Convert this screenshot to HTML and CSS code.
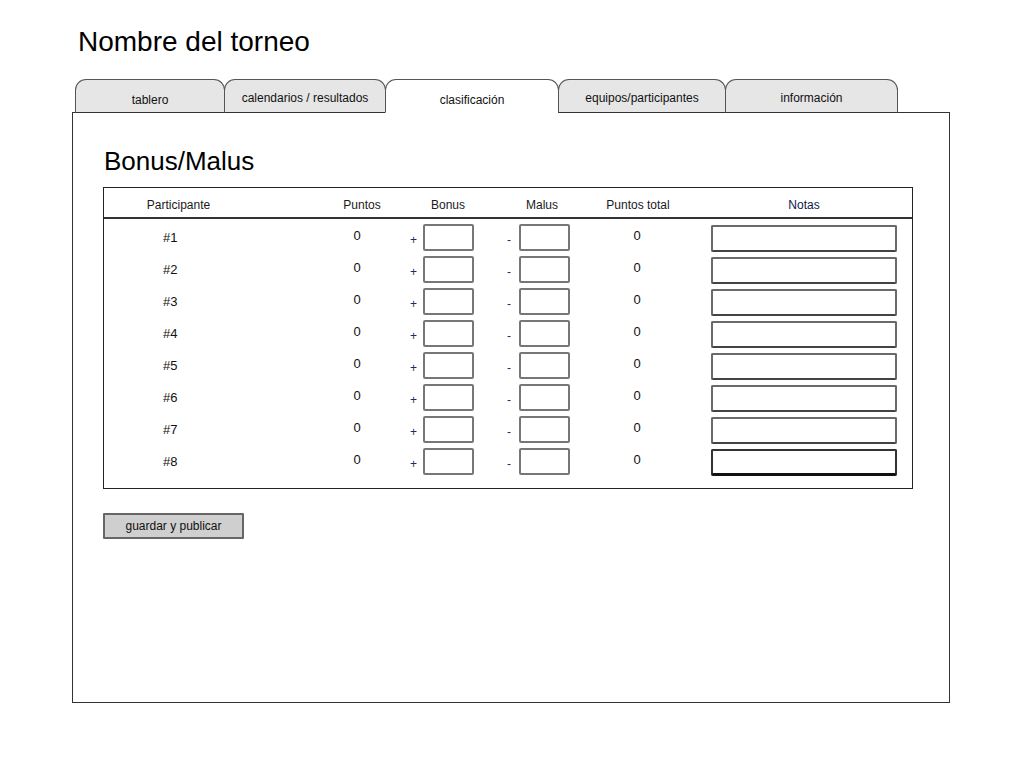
FILE: index.html
```html
<!DOCTYPE html>
<html lang="es">
<head>
<meta charset="utf-8">
<title>Nombre del torneo</title>
<link rel="stylesheet" href="styles.css">
</head>
<body>
<div class="page">
  <h1 class="title">Nombre del torneo</h1>
  <div class="tabs">
    <div class="tab t1">tablero</div>
    <div class="tab t2 up">calendarios / resultados</div>
    <div class="tab t3 active">clasificación</div>
    <div class="tab t4 up">equipos/participantes</div>
    <div class="tab t5 up">información</div>
  </div>
  <div class="panel">
    <h2 class="heading">Bonus/Malus</h2>
    <div class="table">
      <div class="row head">
        <div class="c c1">Participante</div>
        <div class="c c2"></div>
        <div class="c c3">Puntos</div>
        <div class="c c4">Bonus</div>
        <div class="c c5">Malus</div>
        <div class="c c6">Puntos total</div>
        <div class="c c7"></div>
        <div class="c c8 notas">Notas</div>
      </div>
      <div class="body">
        <div class="row"><div class="c c1 p">#1</div><div class="c c2"></div><div class="c c3 v">0</div><div class="c c4 in"><span class="sign">+</span><span class="box"></span></div><div class="c c5 in m"><span class="sign">-</span><span class="box"></span></div><div class="c c6 v">0</div><div class="c c7"></div><div class="c c8"><span class="note"></span></div></div>
        <div class="row"><div class="c c1 p">#2</div><div class="c c2"></div><div class="c c3 v">0</div><div class="c c4 in"><span class="sign">+</span><span class="box"></span></div><div class="c c5 in m"><span class="sign">-</span><span class="box"></span></div><div class="c c6 v">0</div><div class="c c7"></div><div class="c c8"><span class="note"></span></div></div>
        <div class="row"><div class="c c1 p">#3</div><div class="c c2"></div><div class="c c3 v">0</div><div class="c c4 in"><span class="sign">+</span><span class="box"></span></div><div class="c c5 in m"><span class="sign">-</span><span class="box"></span></div><div class="c c6 v">0</div><div class="c c7"></div><div class="c c8"><span class="note"></span></div></div>
        <div class="row"><div class="c c1 p">#4</div><div class="c c2"></div><div class="c c3 v">0</div><div class="c c4 in"><span class="sign">+</span><span class="box"></span></div><div class="c c5 in m"><span class="sign">-</span><span class="box"></span></div><div class="c c6 v">0</div><div class="c c7"></div><div class="c c8"><span class="note"></span></div></div>
        <div class="row"><div class="c c1 p">#5</div><div class="c c2"></div><div class="c c3 v">0</div><div class="c c4 in"><span class="sign">+</span><span class="box"></span></div><div class="c c5 in m"><span class="sign">-</span><span class="box"></span></div><div class="c c6 v">0</div><div class="c c7"></div><div class="c c8"><span class="note"></span></div></div>
        <div class="row"><div class="c c1 p">#6</div><div class="c c2"></div><div class="c c3 v">0</div><div class="c c4 in"><span class="sign">+</span><span class="box"></span></div><div class="c c5 in m"><span class="sign">-</span><span class="box"></span></div><div class="c c6 v">0</div><div class="c c7"></div><div class="c c8"><span class="note"></span></div></div>
        <div class="row"><div class="c c1 p">#7</div><div class="c c2"></div><div class="c c3 v">0</div><div class="c c4 in"><span class="sign">+</span><span class="box"></span></div><div class="c c5 in m"><span class="sign">-</span><span class="box"></span></div><div class="c c6 v">0</div><div class="c c7"></div><div class="c c8"><span class="note"></span></div></div>
        <div class="row"><div class="c c1 p">#8</div><div class="c c2"></div><div class="c c3 v">0</div><div class="c c4 in"><span class="sign">+</span><span class="box"></span></div><div class="c c5 in m"><span class="sign">-</span><span class="box"></span></div><div class="c c6 v">0</div><div class="c c7"></div><div class="c c8"><span class="note dark"></span></div></div>
      </div>
    </div>
    <button class="btn" type="button">guardar y publicar</button>
  </div>
</div>
</body>
</html>
```
FILE: styles.css
```css
html, body {
  margin: 0;
  padding: 0;
  background: #ffffff;
}
body {
  font-family: "Liberation Sans", Arial, sans-serif;
  color: #111111;
}
.page {
  padding: 26px 0 0 72px;
  width: 878px;
}
.title {
  margin: 0 0 22px 6px;
  font-size: 28px;
  line-height: 31px;
  font-weight: normal;
  color: #000;
}
.tabs {
  display: flex;
  margin-left: 3px;
  margin-bottom: -1px;
  position: relative;
  z-index: 1;
}
.tab {
  box-sizing: border-box;
  height: 34px;
  background: #e6e6e6;
  border: 1px solid #555;
  border-bottom: 1px solid #333;
  border-radius: 11px 11px 0 0;
  font-size: 12px;
  text-align: center;
  padding-top: 13px;
  color: #111;
}
.tab.up { padding-top: 11px; }
.tab + .tab { margin-left: -1px; }
.t1 { width: 150px; }
.t2 { width: 162px; }
.t3 { width: 174px; }
.t4 { width: 168px; }
.t5 { width: 173px; }
.tab.active {
  background: #ffffff;
  border-bottom-color: #ffffff;
}
.panel {
  box-sizing: border-box;
  height: 591px;
  border: 1px solid #333;
  padding: 33px 0 0 30px;
}
.heading {
  margin: 0 0 11px 1px;
  font-size: 26px;
  line-height: 30px;
  font-weight: normal;
  color: #000;
}
.table {
  box-sizing: border-box;
  width: 810px;
  border: 1px solid #222;
}
.row {
  display: grid;
  grid-template-columns: 149px 69px 80px 92px 96px 96px 25px 186px 1fr;
  align-items: center;
}
.head {
  height: 29px;
  border-bottom: 2px solid #333;
  font-size: 12px;
  color: #1a1a1a;
}
.head .c { text-align: center; padding-top: 4px; }
.head .notas { color: #10184a; }
.body {
  padding: 2px 0 11px 0;
}
.body .row {
  height: 32px;
  font-size: 13px;
}
.c1.p { padding-left: 59px; }
.c3.v { text-align: center; padding-right: 10px; margin-top: -3px; }
.c6.v { text-align: center; padding-right: 2px; margin-top: -3px; }
.in {
  display: flex;
  align-items: center;
  padding-left: 8px;
}
.in.m { padding-left: 13px; }
.sign {
  width: 13px;
  font-size: 12px;
  color: #17305e;
  margin-top: 5px;
}
.in.m .sign { width: 12px; }
.box {
  box-sizing: border-box;
  width: 51px;
  height: 27px;
  border: 2px solid #777;
  border-radius: 2px;
  background: #fff;
}
.body .c8 { display: flex; }
.note {
  box-sizing: border-box;
  width: 187px;
  height: 27px;
  border: 2px solid #6a6a6a;
  border-bottom-color: #444;
  border-radius: 2px;
  margin-top: 2px;
}
.note.dark { border-color: #333; border-bottom: 3px solid #111; }
.btn {
  display: block;
  box-sizing: border-box;
  margin-top: 24px;
  width: 141px;
  height: 26px;
  background: #cfcfcf;
  border: 2px solid #666;
  border-radius: 1px;
  font-family: "Liberation Sans", Arial, sans-serif;
  font-size: 12px;
  color: #111;
  padding: 0;
}
```
